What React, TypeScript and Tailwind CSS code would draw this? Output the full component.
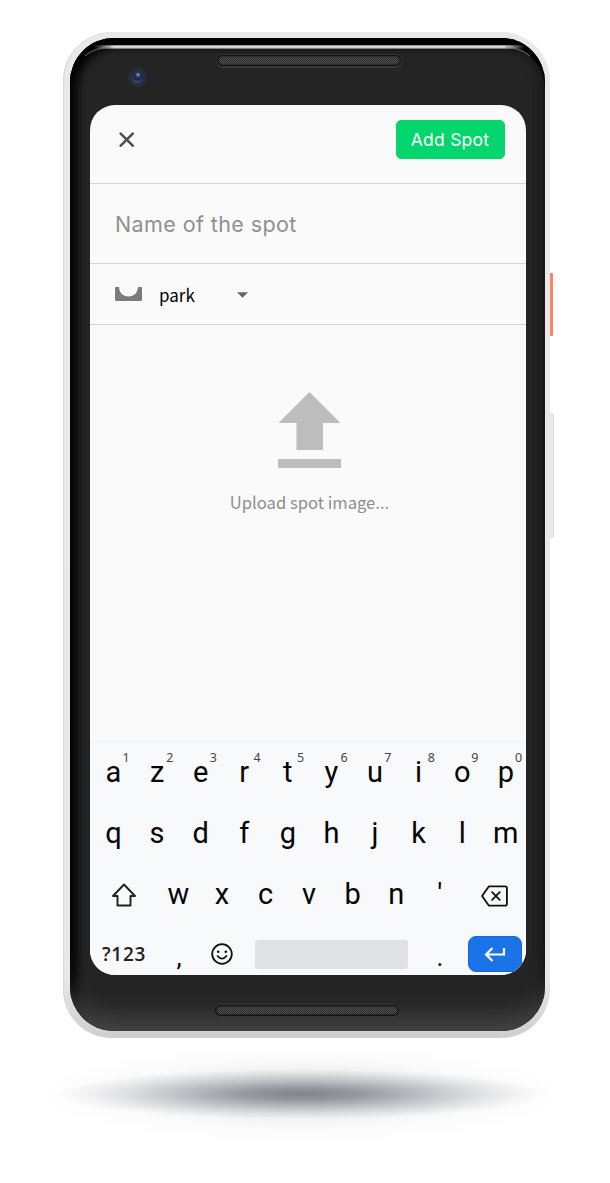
import React from "react";

const ROW_ONE = ["a", "z", "e", "r", "t", "y", "u", "i", "o", "p"];
const ROW_TWO = ["q", "s", "d", "f", "g", "h", "j", "k", "l", "m"];
const ROW_THREE = ["w", "x", "c", "v", "b", "n", "'"];

function Speaker() {
  return (
    <div className="h-[13px] w-[186px] rounded-full border border-[#343434] bg-[#111] p-[1px] shadow-[0_1px_0_#3b3b3b]">
      <div className="h-full rounded-full bg-[#2c2c2c] bg-[conic-gradient(#505050_25%,transparent_0_50%,#505050_0_75%,transparent_0)] bg-[size:2px_2px] shadow-[inset_0_0_2px_#000]" />
    </div>
  );
}

function Key({ label, hint }: { label: string; hint?: string }) {
  return (
    <button className="relative flex h-[61px] w-[43.6px] shrink-0 items-center justify-center font-['Roboto',sans-serif] text-[29px] leading-none text-[#050505]">
      {label}
      {hint && (
        <span className="absolute left-[26.5px] top-[8px] w-4 text-center font-['Noto_Sans',sans-serif] text-[12.5px] leading-4 text-[#444]">
          {hint}
        </span>
      )}
    </button>
  );
}

function Keyboard() {
  return (
    <section className="flex h-[234px] shrink-0 flex-col overflow-hidden border-t border-[#eff1f3] bg-[#f8f9fb]">
      <div className="flex h-[61px] shrink-0 pl-[1.7px]">
        {ROW_ONE.map((key, i) => (
          <Key key={key} label={key} hint={String((i + 1) % 10)} />
        ))}
      </div>
      <div className="flex h-[61px] shrink-0 pl-[1.7px]">
        {ROW_TWO.map((key) => (
          <Key key={key} label={key} />
        ))}
      </div>
      <div className="flex h-[61px] shrink-0 pl-[1.5px]">
        <button className="flex w-[65px] shrink-0 items-center justify-center" aria-label="Shift">
          <svg className="h-[24px] w-[26px]" viewBox="0 0 26 24" fill="none" stroke="#202124" strokeWidth="1.9" strokeLinejoin="round">
            <path d="M13 1.5 24 13H19.5V22.5H6.5V13H2Z" />
          </svg>
        </button>
        {ROW_THREE.map((key) => (
          <Key key={key} label={key} />
        ))}
        <button className="flex w-[65px] shrink-0 items-center justify-center pt-[2px]" aria-label="Delete">
          <svg className="h-[22px] w-[27px]" viewBox="0 0 28 23" fill="none" stroke="#111" strokeWidth="1.9" strokeLinecap="round" strokeLinejoin="round">
            <path d="M8 1.5H25Q27 1.5 27 3.5V19.5Q27 21.5 25 21.5H8L1 11.5Z" />
            <path d="m11.5 7.5 8 8m0-8-8 8" />
          </svg>
        </button>
      </div>
      <div className="flex h-[50px] shrink-0 pt-[11px]">
        <button className="flex h-[36px] w-[67px] items-center justify-center pl-[1px] font-['Open_Sans',sans-serif] text-[19px] font-semibold leading-[36px] tracking-[0.7px] text-[#222]">
          <span className="-mt-[1px]">?123</span>
        </button>
        <button className="w-[44px] pt-[2px] text-center font-['Roboto',sans-serif] text-[26px] leading-[36px] text-black">,</button>
        <button className="flex h-[35px] w-[42px] items-center justify-center" aria-label="Emoji">
          <svg className="h-[22px] w-[22px]" viewBox="0 0 22 22" fill="none" stroke="#111" strokeWidth="1.8" strokeLinecap="round">
            <circle cx="11" cy="11" r="9.8" />
            <circle cx="7.2" cy="8.7" r="1.3" fill="#111" stroke="none" />
            <circle cx="14.8" cy="8.7" r="1.3" fill="#111" stroke="none" />
            <path d="M6.6 13q4.4 5.4 8.8 0" />
          </svg>
        </button>
        <button className="ml-[11.5px] mt-[3.5px] h-[29px] w-[153.5px] rounded-[3px] bg-[#dfe2e2]" aria-label="Space" />
        <button className="w-[60px] pl-1 pt-[2px] text-center font-['Roboto',sans-serif] text-[26px] leading-[36px] text-black">.</button>
        <button className="flex h-[36px] w-[54px] items-center justify-center rounded-[8px] border border-[#1265df] bg-[#1a73e8]" aria-label="Enter">
          <svg className="h-[16px] w-[22px]" viewBox="0 0 22 16" fill="none" stroke="#fff" strokeWidth="2.2">
            <path d="M20 2V8.5H2M8.5 2 2 8.5 8.5 15" />
          </svg>
        </button>
      </div>
    </section>
  );
}

function Screen() {
  return (
    <main className="flex h-[870px] w-[436px] flex-col overflow-hidden rounded-[25px] bg-[#fafafa]">
      <header className="flex h-[79px] shrink-0 items-start justify-between border-b border-[#d5d5d5] pl-[29px] pr-[21.5px] pt-[15px]">
        <button className="mt-[12px]" aria-label="Close">
          <svg className="h-[15px] w-[15px]" viewBox="0 0 15 15" fill="none" stroke="#4d4d4d" strokeWidth="2.5" strokeLinecap="round">
            <path d="m1.7 1.7 12 12m0-12-12 12" />
          </svg>
        </button>
        <button className="h-[39px] w-[109px] rounded-[5px] border border-[#11ce70] bg-[#03d66d] text-center font-['Inter',sans-serif] text-[17.5px] leading-[38px] tracking-[0.25px] text-white">
          Add Spot
        </button>
      </header>
      <div className="flex h-[80px] shrink-0 items-center border-b border-[#d5d5d5] pl-[25px] pt-[2px] font-['Inter',sans-serif] text-[21.5px] tracking-[0.4px] text-[#909090]">
        Name of the spot
      </div>
      <div className="flex h-[61px] shrink-0 items-center border-b border-[#d0d0d0] pl-[25px]">
        <svg className="h-[14px] w-[27px]" viewBox="0 0 27 14" fill="#7b7b7b">
          <path d="M1 0H4C4.5 6 8 9.5 13.5 9.5S22.500 6 23 0H26Q27 0 27 1V13Q27 14 26 14H1Q0 14 0 13V1Q0 0 1 0Z" />
        </svg>
        <span className="ml-[17px] w-[78px] pt-[1px] font-['Noto_Sans_CJK_SC',sans-serif] text-[17px] leading-6 text-black">park</span>
        <svg className="mt-[2px] h-[6px] w-[11px]" viewBox="0 0 12 6" fill="#666">
          <path d="M0 0H12L6 6Z" />
        </svg>
      </div>
      <section className="flex min-h-0 flex-1 flex-col items-center pt-[67px]">
        <svg className="ml-[3.5px] h-[76px] w-[63px]" viewBox="0 0 63 76" fill="#bdbdbd">
          <path d="M31.500 0 62.500 31H45V58H18.500V31H.5ZM0 67H63V76H0Z" />
        </svg>
        <p className="ml-[3px] mt-[20px] font-['Noto_Sans_CJK_SC',sans-serif] text-[16.6px] leading-7 text-[#8e8e8e]">Upload spot image...</p>
      </section>
      <Keyboard />
    </main>
  );
}

export default function App() {
  return (
    <div className="h-[1183px] w-[610px] overflow-hidden bg-white pt-8">
      <div className="relative ml-[63px] h-[1006px] w-[487px] rounded-[49px] bg-[linear-gradient(to_bottom,#e9e9e9,#e8e8e8_94%,#cecece)] p-[6px_5px_7px_7px] shadow-[inset_1px_0_1px_#d8d8d8]">
        <div className="absolute left-[487px] top-[241px] h-[63px] w-[3px] rounded-r-[1px] bg-[#ff805f]" />
        <div className="absolute left-[487px] top-[381px] h-[125px] w-[4px] rounded-r-[2px] border border-l-0 border-[#dedede] bg-[#e9e9e9]" />
        <div className="relative flex h-[993px] w-[475px] flex-col overflow-hidden rounded-[44px] bg-[#242424] pl-[20px] shadow-[inset_0_-30px_24px_-16px_#464646,inset_7px_8px_9px_#020202,inset_-3px_0_12px_#121212]">
          <div className="pointer-events-none absolute inset-0 rounded-[44px] shadow-[inset_0_7px_0_#020202]" />
          <div className="absolute left-[24px] right-[20px] top-[7px] h-[4px] bg-[linear-gradient(to_bottom,#777,#ddd_35%,#ccc_65%,#555)] [mask-image:linear-gradient(to_right,transparent,black_20px,black_calc(100%_-_20px),transparent)]" />
          <svg className="pointer-events-none absolute left-0 top-0 h-[44px] w-[475px]" viewBox="0 0 475 44" fill="none">
            <path d="M15 18Q24 10 40 9M460 18Q451 10 435 9" stroke="#888" strokeWidth="1.5" opacity=".5" />
          </svg>
          <div className="flex h-[67px] shrink-0">
            <div className="ml-[38px] mt-[30px] flex h-[19px] w-[19px] items-center justify-center rounded-full bg-[#292d3b]">
              <div className="h-[11px] w-[11px] rounded-full bg-[radial-gradient(circle_at_55%_25%,#b7bfdb_0,#34416d_18%,#1b2340_45%,#536aa6_100%)]" />
            </div>
            <div className="ml-[69px] mt-[16px]"><Speaker /></div>
          </div>
          <Screen />
          <div className="ml-[124px] mt-[29px]"><Speaker /></div>
        </div>
      </div>
      <svg className="ml-[35px] -mt-[4px] h-[115px] w-[540px]" viewBox="0 0 540 115">
        <defs>
          <radialGradient id="shadow-core">
            <stop offset="0" stopColor="#1b1c24" stopOpacity=".47" />
            <stop offset=".25" stopColor="#1b1c24" stopOpacity=".38" />
            <stop offset=".5" stopColor="#2c3040" stopOpacity=".25" />
            <stop offset=".75" stopColor="#3c4152" stopOpacity=".12" />
            <stop offset="1" stopColor="#555" stopOpacity="0" />
          </radialGradient>
          <radialGradient id="shadow-haze">
            <stop offset="0" stopColor="#3b3e4c" stopOpacity=".17" />
            <stop offset=".4" stopColor="#50535e" stopOpacity=".1" />
            <stop offset=".7" stopColor="#666" stopOpacity=".03" />
            <stop offset="1" stopColor="#888" stopOpacity="0" />
          </radialGradient>
        </defs>
        <ellipse cx="267" cy="60" rx="264" ry="50" fill="url(#shadow-haze)" />
        <ellipse cx="267" cy="60" rx="245" ry="25" fill="url(#shadow-core)" />
      </svg>
    </div>
  );
}
